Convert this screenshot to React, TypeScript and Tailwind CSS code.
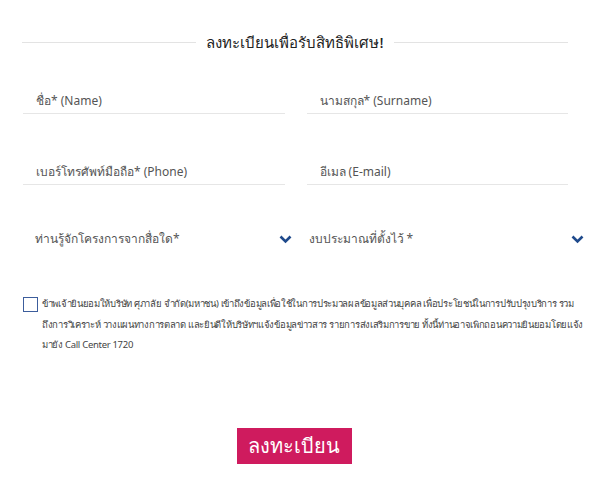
import React from 'react';

const font = { fontFamily: '"Noto Sans", "Liberation Sans", sans-serif' };

const Chevron: React.FC = () => (
  <svg width="13" height="9" viewBox="0 0 13 9" aria-hidden="true">
    <path d="M1.5 1.5 L6.5 6.5 L11.5 1.5" fill="none" stroke="#1f4a8c" strokeWidth="2.6" />
  </svg>
);

const Field: React.FC<{ label: string }> = ({ label }) => (
  <div className="border-b border-[#e6e6e6] pb-[3px] pl-[13px] text-[12px] leading-[18px] text-[#555]">{label}</div>
);

const Select: React.FC<{ label: string; className?: string }> = ({ label, className }) => (
  <div className={`flex items-center justify-between text-[12px] leading-[18px] text-[#555] ${className ?? ''}`}>
    <span>{label}</span>
    <Chevron />
  </div>
);

const App: React.FC = () => {
  return (
    <div className="h-[477px] w-[600px] bg-white" style={font}>
      <div className="ml-[22px] w-[546px] pt-[32px]">
        <div className="flex items-center gap-[10px]">
          <div className="h-px flex-1 bg-[#e3e3e3]" />
          <h2 className="text-[15px] font-medium leading-[20px] text-[#222]">ลงทะเบียนเพื่อรับสิทธิพิเศษ!</h2>
          <div className="h-px flex-1 bg-[#e3e3e3]" />
        </div>

        <div className="mt-[40px] grid grid-cols-2 gap-x-[22px] gap-y-[49px] pl-px">
          <Field label="ชื่อ* (Name)" />
          <Field label="นามสกุล* (Surname)" />
          <Field label="เบอร์โทรศัพท์มือถือ* (Phone)" />
          <Field label="อีเมล (E-mail)" />
        </div>

        <div className="mt-[45px] grid grid-cols-2 gap-x-[10px] pl-[13px]">
          <Select label="ท่านรู้จักโครงการจากสื่อใด*" className="pr-[5px]" />
          <Select label="งบประมาณที่ตั้งไว้ *" className="-mr-[16px] pl-[2px]" />
        </div>

        <label className="mt-[46px] flex gap-[4px] pl-px text-[9.5px] leading-[20.5px] tracking-[-0.3px] text-[#444]">
          <span className="mt-[3px] h-[15px] w-[15px] shrink-0 border border-[#3c5d9c] bg-white" />
          <span className="whitespace-nowrap">
            ข้าพเจ้ายินยอมให้บริษัท ศุภาลัย จำกัด(มหาชน) เข้าถึงข้อมูลเพื่อใช้ในการประมวลผลข้อมูลส่วนบุคคล เพื่อประโยชน์ในการปรับปรุงบริการ รวม
            <br />
            ถึงการวิเคราะห์ วางแผนทางการตลาด และยินดีให้บริษัทฯแจ้งข้อมูลข่าวสาร รายการส่งเสริมการขาย ทั้งนี้ท่านอาจเพิกถอนความยินยอมโดยแจ้ง
            <br />
            มายัง Call Center 1720
          </span>
        </label>

        <div className="mt-[72px] flex justify-center pr-[2px]">
          <button className="h-[36px] w-[115px] bg-[#cf1b5e] text-[20px] leading-none text-white">ลงทะเบียน</button>
        </div>
      </div>
    </div>
  );
};

export default App;
